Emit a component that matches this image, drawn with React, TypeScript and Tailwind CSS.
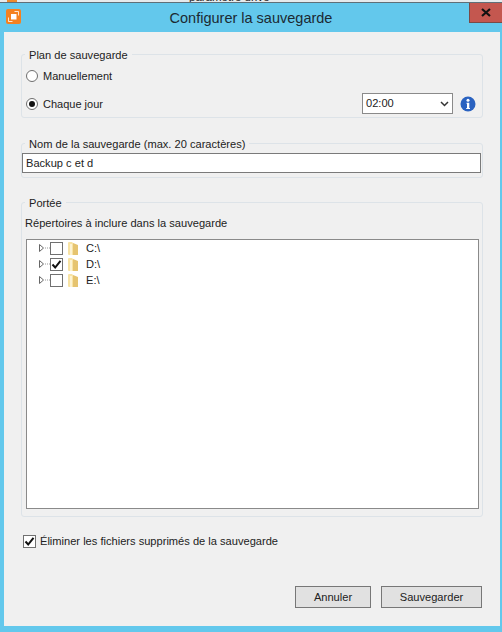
import React from "react";

function Group({ label, className, children }: { label: string; className: string; children: React.ReactNode }) {
  return (
    <div className={`relative mx-[17px] rounded-[3px] border border-[#dde3e8] ${className}`}>
      <span className="absolute left-[3px] top-[-7px] bg-[#f0f0f0] px-[4px] text-[11.1px] leading-[14px] text-[#222]">{label}</span>
      {children}
    </div>
  );
}

function Check({ checked, className = "" }: { checked?: boolean; className?: string }) {
  return (
    <span className={`flex h-[13px] w-[13px] shrink-0 items-center justify-center border border-[#707070] bg-white ${className}`}>
      {checked && (
        <svg width="11" height="11" viewBox="0 0 11 11">
          <path d="M1.5 5.5 L4.2 8.5 L9.5 1.8" fill="none" stroke="#111" strokeWidth="2" />
        </svg>
      )}
    </span>
  );
}

function Radio({ checked, label, className = "" }: { checked?: boolean; label: string; className?: string }) {
  return (
    <div className={`flex items-center gap-[5px] ${className}`}>
      <span className="flex h-[12px] w-[12px] items-center justify-center rounded-full border border-[#6e6e6e] bg-white">
        {checked && <span className="h-[6px] w-[6px] rounded-full bg-[#111]" />}
      </span>
      <span className="text-[11px] leading-[14px] text-[#222]">{label}</span>
    </div>
  );
}

function TreeRow({ label, checked }: { label: string; checked?: boolean }) {
  return (
    <div className="flex h-[16px] items-center">
      <svg width="12" height="16" viewBox="0 0 12 16" className="ml-[11px] shrink-0">
        <path d="M1.5 4.5 L1.5 11.5 L5.5 8 Z" fill="#fff" stroke="#666" />
        <path d="M7 8 H12" stroke="#999" strokeDasharray="1 1" />
      </svg>
      <Check checked={checked} />
      <svg width="12" height="15" viewBox="0 0 12 15" className="ml-[4px] shrink-0">
        <path d="M1 2 Q1 1 2 1 H5 L6 2 V14 H2 Q1 14 1 13 Z" fill="#f8e3a4" />
        <path d="M6 2 L11 4 V14 H6 Z" fill="#e6c470" />
        <path d="M3 3 H5 V14 H3 Z" fill="#fdf3d2" />
      </svg>
      <span className="ml-[7px] text-[11.1px] leading-[14px] text-[#222]">{label}</span>
    </div>
  );
}

export default function App() {
  return (
    <div className="flex h-[632px] w-[502px] flex-col overflow-hidden bg-[#63c8ec] font-['Liberation_Sans',sans-serif]">
      <div className="relative flex h-[3px] overflow-hidden border-b border-[#5f6f78] bg-[#e6eaec]">
        <span className="absolute left-[7px] top-0 h-[2px] w-[10px] bg-[#ee8a2c]" />
        <span className="ml-[189px] mt-[-10px] text-[11.5px] leading-[14px] text-[#222]">paramètre drive</span>
      </div>
      <div className="relative flex h-[29px] items-center justify-center">
        <span className="absolute left-[6px] top-[6px] flex h-[15px] w-[15px] items-center justify-center rounded-[2px] bg-[#f5811f]">
          <svg width="13" height="13" viewBox="0 0 13 13">
            <rect x="4" y="4" width="5.5" height="5.5" fill="#fff" />
            <path d="M7.5 1.5 H11.5 V5.5 M5.5 11.5 H1.5 V7.5" fill="none" stroke="#fff" strokeWidth="1" opacity="0.8" />
          </svg>
        </span>
        <span className="mt-[1px] text-[14.5px] leading-[18px] text-[#1c2a33]">Configurer la sauvegarde</span>
        <span className="absolute right-0 top-0 flex h-[20px] w-[33px] items-center justify-center border-b border-l border-[#7a4a46] bg-[#c4574f]">
          <svg width="10" height="9" viewBox="0 0 10 9">
            <path d="M1 1 L9 8 M9 1 L1 8" stroke="#111" strokeWidth="2.2" />
          </svg>
        </span>
      </div>
      <div className="ml-[4px] mr-[2px] flex h-[594px] flex-col bg-[#f0f0f0] pt-[22px]">
        <Group label="Plan de sauvegarde" className="h-[64px] pl-[4px] pr-[6px] pt-[14px]">
          <Radio label="Manuellement" />
          <div className="mt-[10px] flex items-center justify-between">
            <Radio checked label="Chaque jour" />
            <div className="flex items-center gap-[7px]">
              <div className="flex h-[21px] w-[91px] items-center justify-between border border-[#8a8a8a] bg-white pl-[3px] pr-[3px]">
                <span className="text-[11.1px] text-[#222]">02:00</span>
                <svg width="9" height="6" viewBox="0 0 9 6">
                  <path d="M1 1 L4.5 4.5 L8 1" fill="none" stroke="#333" strokeWidth="1.5" />
                </svg>
              </div>
              <svg width="16" height="16" viewBox="0 0 16 16">
                <circle cx="8" cy="8" r="7.5" fill="#2a62c0" />
                <circle cx="8" cy="4.2" r="1.5" fill="#fff" />
                <path d="M6.5 6.8 H9.3 V12 H10 V13 H6.2 V12 H7 V7.8 H6.5 Z" fill="#fff" />
              </svg>
            </div>
          </div>
        </Group>
        <Group label="Nom de la sauvegarde (max. 20 caractères)" className="mt-[25px] h-[35px] pr-[1px] pt-[9px]">
          <div className="flex h-[20px] items-center border border-[#7a7a7a] bg-white pl-[3px] text-[11.1px] text-[#222]">
            Backup c et d
          </div>
        </Group>
        <Group label="Portée" className="mt-[24px] h-[315px] pl-[4px] pr-[3px] pt-[13px]">
          <div className="ml-[-1px] text-[11.1px] leading-[14px] text-[#222]">Répertoires à inclure dans la sauvegarde</div>
          <div className="mt-[9px] h-[270px] border border-[#8a8a8a] bg-white">
            <TreeRow label="C:\" />
            <TreeRow label="D:\" checked />
            <TreeRow label="E:\" />
          </div>
        </Group>
        <div className="ml-[19px] mt-[17px] flex items-center gap-[4px]">
          <Check checked className="border-[#777]" />
          <span className="text-[11.1px] leading-[14px] text-[#222]">Éliminer les fichiers supprimés de la sauvegarde</span>
        </div>
        <div className="mr-[18px] mt-[38px] flex justify-end gap-[10px]">
          <button className="h-[22px] w-[76px] border border-[#777] bg-[#e1e1e1] text-[11.1px] text-[#222]">Annuler</button>
          <button className="h-[22px] w-[101px] border border-[#777] bg-[#e1e1e1] text-[11.1px] text-[#222]">Sauvegarder</button>
        </div>
      </div>
    </div>
  );
}
